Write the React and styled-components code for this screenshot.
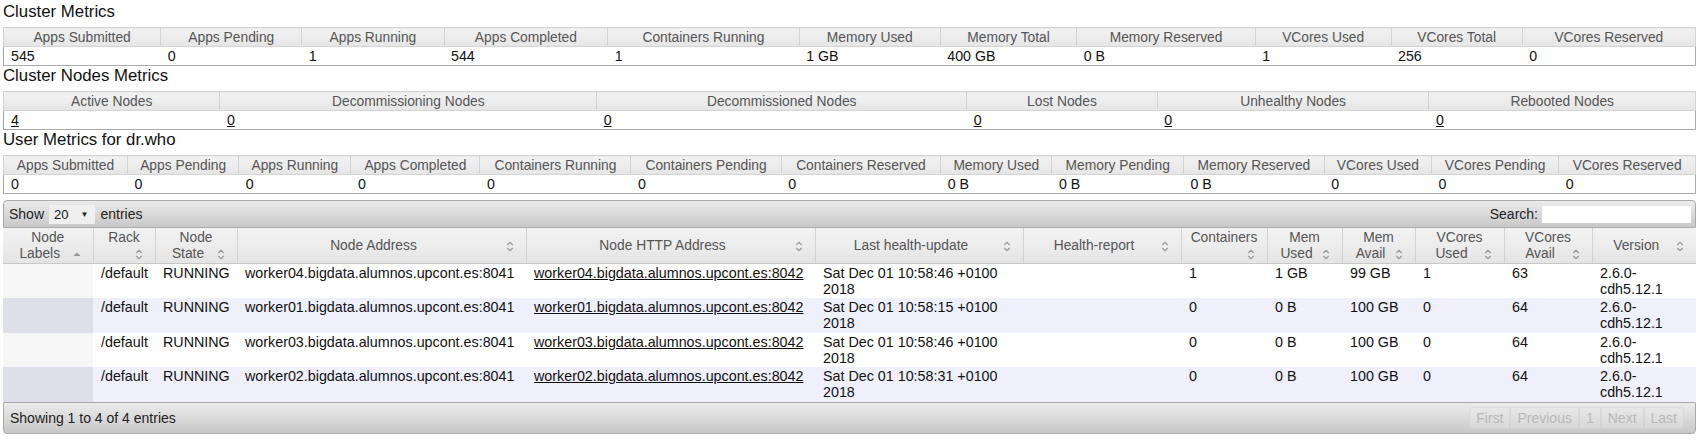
import React from "react";
import styled, { createGlobalStyle } from "styled-components";

const GlobalStyle = createGlobalStyle`
  html, body {
    margin: 0;
    padding: 0;
    background: #fff;
  }
  body {
    font-family: "Liberation Sans", Arial, Helvetica, sans-serif;
    font-size: 14px;
    color: #222;
  }
`;

const Page = styled.div`
  padding: 2px 12px 0 3px;
`;

const SectionTitle = styled.h3`
  margin: 0 0 5px;
  font-size: 16.8px;
  font-weight: normal;
  line-height: 20px;
  color: #111;
`;

const MetricsTable = styled.table`
  width: 100%;
  border-collapse: collapse;
  border: 1px solid #aaa;
`;

const MetricTh = styled.th`
  padding: 1px 7px 0;
  line-height: 17px;
  font-size: 13.8px;
  font-weight: normal;
  color: #555;
  text-align: center;
  white-space: nowrap;
  border: 1px solid #d3d3d3;
  background: linear-gradient(#f2f2f2 0%, #ececec 50%, #e5e5e5 100%);
`;

const MetricTd = styled.td`
  padding: 1px 7px 0;
  line-height: 17px;
  font-size: 14.2px;
  color: #111;
  text-align: left;
  white-space: nowrap;
  background: #fff;
`;

const Link = styled.a`
  color: #111;
  text-decoration: underline;
`;

const Wrapper = styled.div`
  margin-top: 6px;
`;

const Toolbar = styled.div`
  display: flex;
  align-items: center;
  justify-content: space-between;
  height: 26px;
  padding: 0 4px 0 5px;
  border: 1px solid #aaa;
  border-radius: ${(p) => (p.$bottom ? "0 0 4px 4px" : "4px 4px 0 0")};
  background: linear-gradient(#ebebeb, #c8c8c8);
  color: #222;
  ${(p) => p.$bottom && "height: 30px; padding: 0 11px 0 6px;"}
`;

const Group = styled.div`
  display: flex;
  align-items: center;
  gap: ${(p) => p.$gap || 5}px;
`;

const FakeSelect = styled.span`
  display: inline-flex;
  align-items: center;
  gap: 12px;
  height: 19px;
  padding: 0 7px 0 5px;
  background: #efefef;
  font-size: 13px;
  color: #111;
`;

const Caret = styled.span`
  font-size: 8px;
  color: #222;
`;

const SearchInput = styled.input`
  box-sizing: border-box;
  width: 149px;
  height: 17px;
  padding: 0 3px;
  border: none;
  background: #fff;
  font: inherit;
  outline: none;
`;

const NodesTable = styled.table`
  width: 100%;
  table-layout: fixed;
  border-collapse: collapse;
`;

const NodeTh = styled.th`
  padding: 2px 8px 1px;
  line-height: 16px;
  font-size: 13.8px;
  font-weight: normal;
  color: #555;
  text-align: center;
  vertical-align: middle;
  border-right: 1px solid #d3d3d3;
  border-bottom: 1px solid #c8c8c8;
  background: linear-gradient(#f2f2f2 0%, #ececec 50%, #e4e4e4 100%);
  &:last-child {
    border-right: none;
  }
`;

const SortIcon = styled.span`
  float: right;
  display: block;
  width: 16px;
  height: 16px;
`;

const NodeTd = styled.td`
  padding: 2px 8px 1px;
  line-height: 15.7px;
  font-size: 14.3px;
  vertical-align: top;
  color: #111;
  white-space: normal;
  background: ${(p) =>
    p.$sorted ? (p.$even ? "#dedfe9" : "#f6f6f6") : p.$even ? "#eff0fc" : "#fff"};
`;

const Pager = styled.div`
  display: flex;
  align-items: center;
`;

const PageBtn = styled.span`
  padding: 0 6px;
  line-height: 20px;
  color: #b9b9b9;
  border: 1px solid rgba(200, 200, 200, 0.4);
  background: rgba(235, 235, 235, 0.35);
  & + & {
    border-left-color: rgba(190, 190, 190, 0.3);
  }
  &:first-child {
    border-radius: 4px 0 0 4px;
  }
  &:last-child {
    border-radius: 0 4px 4px 0;
  }
`;

const SortBoth = () => (
  <svg width="16" height="16" viewBox="0 0 16 16">
    <path
      d="M5.3 7 L8 4.3 L10.7 7 M5.3 10 L8 12.7 L10.7 10"
      fill="none"
      stroke="#969696"
      strokeWidth="1.15"
    />
  </svg>
);

const SortAsc = () => (
  <svg width="16" height="16" viewBox="0 0 16 16">
    <path d="M4.5 10 L8 6.5 L11.5 10 Z" fill="#969696" />
  </svg>
);

const clusterMetrics = [
  ["Apps Submitted", "545"],
  ["Apps Pending", "0"],
  ["Apps Running", "1"],
  ["Apps Completed", "544"],
  ["Containers Running", "1"],
  ["Memory Used", "1 GB"],
  ["Memory Total", "400 GB"],
  ["Memory Reserved", "0 B"],
  ["VCores Used", "1"],
  ["VCores Total", "256"],
  ["VCores Reserved", "0"],
];

const nodeMetrics = [
  ["Active Nodes", "4"],
  ["Decommissioning Nodes", "0"],
  ["Decommissioned Nodes", "0"],
  ["Lost Nodes", "0"],
  ["Unhealthy Nodes", "0"],
  ["Rebooted Nodes", "0"],
];

const userMetrics = [
  ["Apps Submitted", "0"],
  ["Apps Pending", "0"],
  ["Apps Running", "0"],
  ["Apps Completed", "0"],
  ["Containers Running", "0"],
  ["Containers Pending", "0"],
  ["Containers Reserved", "0"],
  ["Memory Used", "0 B"],
  ["Memory Pending", "0 B"],
  ["Memory Reserved", "0 B"],
  ["VCores Used", "0"],
  ["VCores Pending", "0"],
  ["VCores Reserved", "0"],
];

const columns = [
  { title: "Node Labels", width: 90, sort: "asc" },
  { title: "Rack", width: 62 },
  { title: "Node State", width: 82 },
  { title: "Node Address", width: 289 },
  { title: "Node HTTP Address", width: 289 },
  { title: "Last health-update", width: 208 },
  { title: "Health-report", width: 158 },
  { title: "Containers", width: 86 },
  { title: "Mem Used", width: 75 },
  { title: "Mem Avail", width: 73 },
  { title: "VCores Used", width: 89 },
  { title: "VCores Avail", width: 88 },
  { title: "Version", width: 104 },
];

const nodes = [
  { id: "04", time: "10:58:46", cont: "1", used: "1 GB", avail: "99 GB", vu: "1", va: "63" },
  { id: "01", time: "10:58:15", cont: "0", used: "0 B", avail: "100 GB", vu: "0", va: "64" },
  { id: "03", time: "10:58:46", cont: "0", used: "0 B", avail: "100 GB", vu: "0", va: "64" },
  { id: "02", time: "10:58:31", cont: "0", used: "0 B", avail: "100 GB", vu: "0", va: "64" },
];

const Metrics = ({ title, data, links }) => (
  <>
    <SectionTitle>{title}</SectionTitle>
    <MetricsTable>
      <thead>
        <tr>
          {data.map(([h]) => (
            <MetricTh key={h}>{h}</MetricTh>
          ))}
        </tr>
      </thead>
      <tbody>
        <tr>
          {data.map(([h, v]) => (
            <MetricTd key={h}>{links ? <Link href="#">{v}</Link> : v}</MetricTd>
          ))}
        </tr>
      </tbody>
    </MetricsTable>
  </>
);

const NodesList = () => (
  <Wrapper>
    <Toolbar>
      <Group $gap={5}>
        <span>Show</span>
        <FakeSelect>
          20 <Caret>▼</Caret>
        </FakeSelect>
        <span>entries</span>
      </Group>
      <Group $gap={4}>
        <span>Search:</span>
        <SearchInput type="text" />
      </Group>
    </Toolbar>
    <NodesTable>
      <colgroup>
        {columns.map((c) => (
          <col key={c.title} style={{ width: c.width }} />
        ))}
      </colgroup>
      <thead>
        <tr>
          {columns.map((c) => (
            <NodeTh key={c.title}>
              <div>
                {c.title}
                <SortIcon>{c.sort === "asc" ? <SortAsc /> : <SortBoth />}</SortIcon>
              </div>
            </NodeTh>
          ))}
        </tr>
      </thead>
      <tbody>
        {nodes.map((n, i) => {
          const even = i % 2 === 1;
          const host = `worker${n.id}.bigdata.alumnos.upcont.es`;
          return (
            <tr key={n.id}>
              <NodeTd $sorted $even={even}></NodeTd>
              <NodeTd $even={even}>/default</NodeTd>
              <NodeTd $even={even}>RUNNING</NodeTd>
              <NodeTd $even={even}>{host}:8041</NodeTd>
              <NodeTd $even={even}>
                <Link href="#">{host}:8042</Link>
              </NodeTd>
              <NodeTd $even={even}>Sat Dec 01 {n.time} +0100 2018</NodeTd>
              <NodeTd $even={even}></NodeTd>
              <NodeTd $even={even}>{n.cont}</NodeTd>
              <NodeTd $even={even}>{n.used}</NodeTd>
              <NodeTd $even={even}>{n.avail}</NodeTd>
              <NodeTd $even={even}>{n.vu}</NodeTd>
              <NodeTd $even={even}>{n.va}</NodeTd>
              <NodeTd $even={even}>2.6.0-cdh5.12.1</NodeTd>
            </tr>
          );
        })}
      </tbody>
    </NodesTable>
    <Toolbar $bottom>
      <span>Showing 1 to 4 of 4 entries</span>
      <Pager>
        <PageBtn>First</PageBtn>
        <PageBtn>Previous</PageBtn>
        <PageBtn>1</PageBtn>
        <PageBtn>Next</PageBtn>
        <PageBtn>Last</PageBtn>
      </Pager>
    </Toolbar>
  </Wrapper>
);

export default function App() {
  return (
    <Page>
      <GlobalStyle />
      <Metrics title="Cluster Metrics" data={clusterMetrics} />
      <Metrics title="Cluster Nodes Metrics" data={nodeMetrics} links />
      <Metrics title="User Metrics for dr.who" data={userMetrics} />
      <NodesList />
    </Page>
  );
}
